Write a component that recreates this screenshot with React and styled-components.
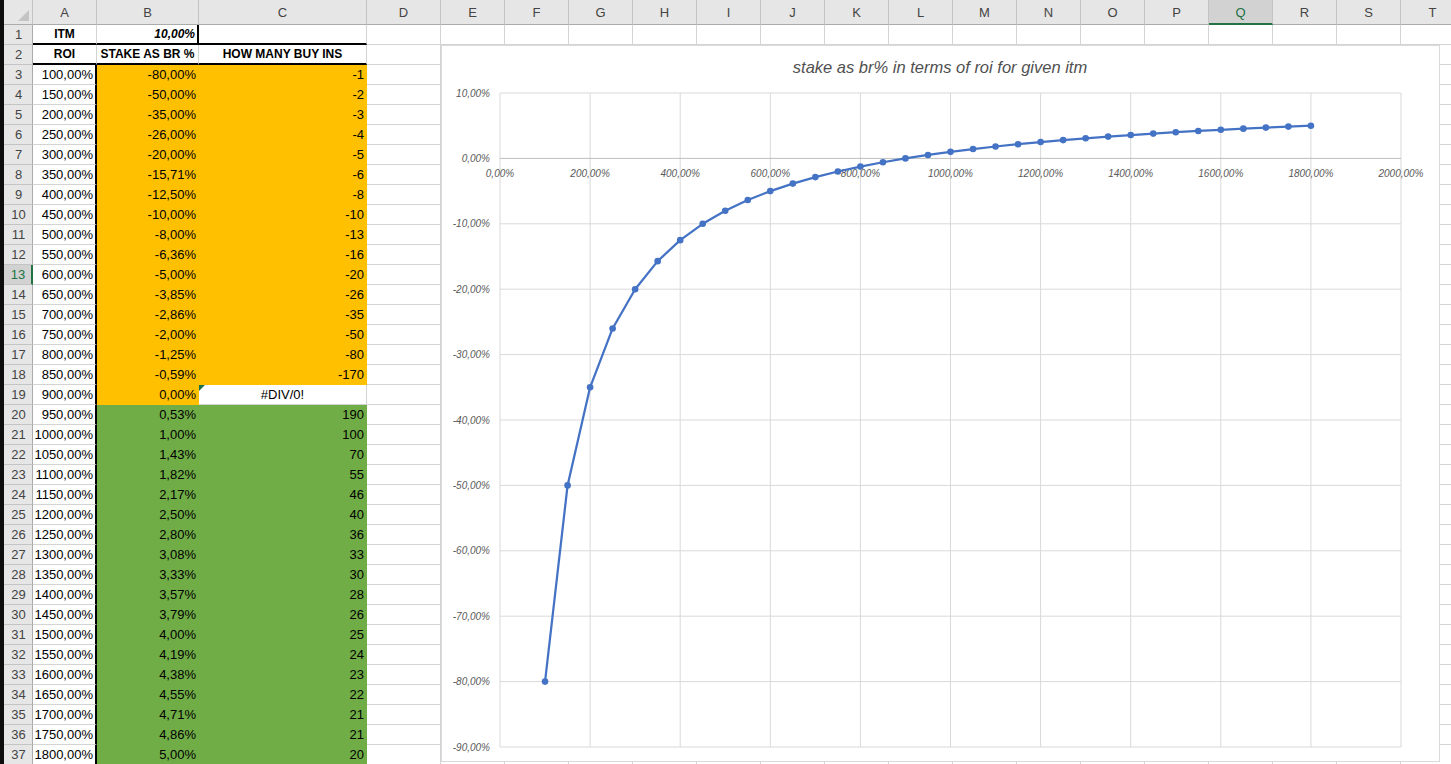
import React from "react";
import styled, { createGlobalStyle } from "styled-components";

const GlobalStyle = createGlobalStyle`
  html, body {
    margin: 0;
    padding: 0;
    background: #ffffff;
    overflow: hidden;
  }
  body {
    font-family: "Liberation Sans", Arial, sans-serif;
  }
`;

const LETTERS = "ABCDEFGHIJKLMNOPQRST".split("");
const WIDTHS = { A: 64, B: 102, C: 168, D: 74 };
const colWidth = (k) => WIDTHS[k] || 64;

const STAKES = [
  "-80,00%", "-50,00%", "-35,00%", "-26,00%", "-20,00%", "-15,71%", "-12,50%",
  "-10,00%", "-8,00%", "-6,36%", "-5,00%", "-3,85%", "-2,86%", "-2,00%",
  "-1,25%", "-0,59%", "0,00%", "0,53%", "1,00%", "1,43%", "1,82%", "2,17%",
  "2,50%", "2,80%", "3,08%", "3,33%", "3,57%", "3,79%", "4,00%", "4,19%",
  "4,38%", "4,55%", "4,71%", "4,86%", "5,00%",
];
const BUYINS = [
  "-1", "-2", "-3", "-4", "-5", "-6", "-8", "-10", "-13", "-16", "-20", "-26",
  "-35", "-50", "-80", "-170", "#DIV/0!", "190", "100", "70", "55", "46", "40",
  "36", "33", "30", "28", "26", "25", "24", "23", "22", "21", "21", "20",
];

// each data row: roi, stake, buy ins
const DATA = STAKES.map((s, i) => ({
  roi: 100 + i * 50,
  stake: s,
  value: parseFloat(s.replace(",", ".")),
  buyins: BUYINS[i],
}));

const FILL = { orange: "#ffc000", green: "#70ad47", none: "#ffffff" };

const Page = styled.div`
  display: flex;
  width: 1451px;
  height: 764px;
  overflow: hidden;
  position: relative;
  background: #111;
`;

const Edge = styled.div`
  width: 4px;
  flex: none;
  background: #0d0d0d;
`;

const Sheet = styled.div`
  display: grid;
  grid-template-columns: 29px ${LETTERS.map((k) => colWidth(k) + "px").join(" ")};
  grid-template-rows: 25px repeat(37, 20px);
  background: #ffffff;
  flex: none;
  font-size: 13px;
  color: #000;
`;

const Corner = styled.div`
  background: #e6e6e6;
  border-right: 1px solid #c4c4c4;
  border-bottom: 1px solid #ababab;
  position: relative;
  &::after {
    content: "";
    position: absolute;
    right: 3px;
    bottom: 3px;
    border-left: 11px solid transparent;
    border-bottom: 11px solid #c4c4c4;
  }
`;

const ColHead = styled.div`
  box-sizing: border-box;
  display: flex;
  align-items: center;
  justify-content: center;
  background: ${(p) => (p.$active ? "#d2d2d2" : "#e6e6e6")};
  color: ${(p) => (p.$active ? "#217346" : "#444")};
  border-right: 1px solid #c4c4c4;
  border-bottom: ${(p) => (p.$active ? "2px solid #217346" : "1px solid #ababab")};
  font-size: 13px;
  padding-top: 1px;
`;

const RowHead = styled.div`
  box-sizing: border-box;
  display: flex;
  align-items: center;
  justify-content: center;
  background: ${(p) => (p.$active ? "#d2d2d2" : "#e6e6e6")};
  color: ${(p) => (p.$active ? "#217346" : "#444")};
  border-right: ${(p) => (p.$active ? "2px solid #217346" : "1px solid #ababab")};
  border-bottom: 1px solid #c4c4c4;
  font-size: 13px;
  padding-left: 1px;
`;

const Cell = styled.div`
  box-sizing: border-box;
  position: relative;
  display: flex;
  align-items: flex-end;
  justify-content: ${(p) => p.$align || "flex-start"};
  padding: 0 2px 2px 2px;
  white-space: nowrap;
  overflow: hidden;
  background: ${(p) => FILL[p.$fill || "none"]};
  font-weight: ${(p) => (p.$bold ? 700 : 400)};
  font-style: ${(p) => (p.$italic ? "italic" : "normal")};
  font-size: ${(p) => (p.$bold ? "12px" : "13px")};
  border-right: ${(p) =>
    p.$thickRight
      ? "2px solid #000"
      : `1px solid ${p.$fill ? FILL[p.$fill] : "#d4d4d4"}`};
  border-bottom: ${(p) =>
    p.$thickBottom
      ? "2px solid #000"
      : `1px solid ${p.$fill ? FILL[p.$fill] : "#d4d4d4"}`};

  ${(p) =>
    p.$flag &&
    `&::before {
      content: "";
      position: absolute;
      left: 0;
      top: 0;
      border-top: 6px solid #1e7145;
      border-right: 6px solid transparent;
    }`}
`;

const ChartBox = styled.div`
  position: absolute;
  left: 441px;
  top: 45px;
  width: 999px;
  height: 717px;
  box-sizing: border-box;
  background: #ffffff;
  border: 1px solid #d9d9d9;
`;

const ChartSvg = styled.svg`
  display: block;
  font-family: "Liberation Sans", Arial, sans-serif;
  font-style: italic;
`;

// chart geometry, in the box's own coordinates
const PX0 = 58;
const PX1 = 959;
const PY0 = 47;
const STEP_Y = 65.4;
const xOf = (roi) => PX0 + (roi / 2000) * (PX1 - PX0);
const yOf = (v) => PY0 + ((10 - v) / 10) * STEP_Y;

const StakeChart = () => {
  const yTicks = [];
  for (let k = 0; k <= 10; k++) yTicks.push(10 - k * 10);
  const xTicks = [];
  for (let r = 0; r <= 2000; r += 200) xTicks.push(r);
  const points = DATA.map((d) => [xOf(d.roi), yOf(d.value)]);

  return (
    <ChartBox>
      <ChartSvg width="997" height="715" viewBox="0 0 997 715">
        <text
          x="498"
          y="27"
          textAnchor="middle"
          fontSize="16.5"
          fill="#505050"
        >
          stake as br% in terms of roi for given itm
        </text>

        {xTicks.map((r) => (
          <line
            key={"vx" + r}
            x1={xOf(r)}
            x2={xOf(r)}
            y1={PY0}
            y2={yOf(-90)}
            stroke="#d9d9d9"
            strokeWidth="1"
          />
        ))}
        {yTicks.map((v) => (
          <line
            key={"hy" + v}
            x1={PX0}
            x2={PX1}
            y1={yOf(v)}
            y2={yOf(v)}
            stroke={v === 0 ? "#bfbfbf" : "#d9d9d9"}
            strokeWidth="1"
          />
        ))}

        {yTicks.map((v) => (
          <text
            key={"ly" + v}
            x={PX0 - 10}
            y={yOf(v) + 3.5}
            textAnchor="end"
            fontSize="10"
            fill="#595959"
          >
            {v.toFixed(2).replace(".", ",") + "%"}
          </text>
        ))}
        {xTicks.map((r) => (
          <text
            key={"lx" + r}
            x={xOf(r)}
            y={yOf(0) + 19}
            textAnchor="middle"
            fontSize="10"
            fill="#595959"
          >
            {r.toFixed(2).replace(".", ",") + "%"}
          </text>
        ))}

        <polyline
          points={points.map((p) => p.join(",")).join(" ")}
          fill="none"
          stroke="#4472c4"
          strokeWidth="2.25"
          strokeLinejoin="round"
        />
        {points.map(([x, y], i) => (
          <circle key={"pt" + i} cx={x} cy={y} r="3.3" fill="#4472c4" />
        ))}
      </ChartSvg>
    </ChartBox>
  );
};

const App = () => {
  const renderBlank = (rowNo, from) =>
    LETTERS.slice(from).map((k) => <Cell key={k + rowNo} />);

  return (
    <Page>
      <GlobalStyle />
      <Edge />
      <Sheet>
        <Corner />
        {LETTERS.map((k) => (
          <ColHead key={"h" + k} $active={k === "Q"}>
            {k}
          </ColHead>
        ))}

        <RowHead>1</RowHead>
        <Cell $align="center" $bold $thickBottom>
          ITM
        </Cell>
        <Cell $align="flex-end" $bold $italic $thickBottom $thickRight>
          10,00%
        </Cell>
        <Cell $thickBottom />
        {renderBlank(1, 3)}

        <RowHead>2</RowHead>
        <Cell $align="center" $bold $thickBottom>
          ROI
        </Cell>
        <Cell $align="center" $bold $thickBottom>
          STAKE AS BR %
        </Cell>
        <Cell $align="center" $bold $thickBottom>
          HOW MANY BUY INS
        </Cell>
        {renderBlank(2, 3)}

        {DATA.map((d, i) => {
          const rowNo = i + 3;
          const fill = d.value <= 0 ? "orange" : "green";
          const isError = d.buyins.startsWith("#");
          return (
            <React.Fragment key={"r" + rowNo}>
              <RowHead $active={rowNo === 13}>{rowNo}</RowHead>
              <Cell $align="flex-end" $thickRight>
                {d.roi},00%
              </Cell>
              <Cell $align="flex-end" $fill={fill}>
                {d.stake}
              </Cell>
              {isError ? (
                <Cell $align="center" $flag>
                  {d.buyins}
                </Cell>
              ) : (
                <Cell $align="flex-end" $fill={fill}>
                  {d.buyins}
                </Cell>
              )}
              {renderBlank(rowNo, 3)}
            </React.Fragment>
          );
        })}
      </Sheet>
      <StakeChart />
    </Page>
  );
};

export default App;
